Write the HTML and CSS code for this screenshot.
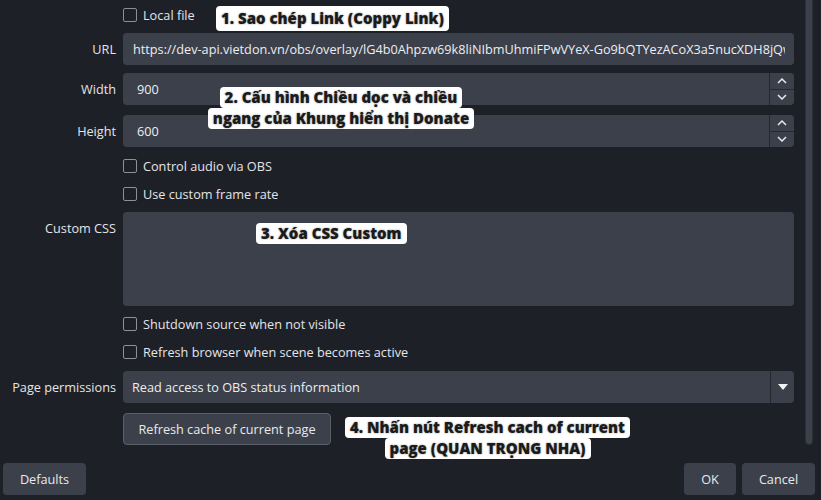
FILE: index.html
```html
<!DOCTYPE html>
<html lang="vi">
<head>
  <meta charset="UTF-8">
  <title>Browser Source Properties</title>
  <link rel="stylesheet" href="styles.css">
</head>
<body>
  <div class="window">
    <div class="scroll-area">
      <div class="form">
        <div class="row check-row first">
          <span></span>
          <label class="check"><input type="checkbox"> Local file</label>
        </div>

        <div class="row field-row url-row">
          <span class="label">URL</span>
          <input class="text-input" type="text" value="https://dev-api.vietdon.vn/obs/overlay/lG4b0Ahpzw69k8liNIbmUhmiFPwVYeX-Go9bQTYezACoX3a5nucXDH8jQwRt">
        </div>

        <div class="row field-row width-row">
          <span class="label">Width</span>
          <div class="spin">
            <span class="spin-value">900</span>
            <div class="spin-buttons">
              <span class="spin-btn"><svg width="10" height="6" viewBox="0 0 10 6"><polyline points="1,5 5,1 9,5" fill="none" stroke="#e8e8e8" stroke-width="1.5"/></svg></span>
              <span class="spin-btn"><svg width="10" height="6" viewBox="0 0 10 6"><polyline points="1,1 5,5 9,1" fill="none" stroke="#e8e8e8" stroke-width="1.5"/></svg></span>
            </div>
          </div>
        </div>

        <div class="row field-row height-row">
          <span class="label">Height</span>
          <div class="spin">
            <span class="spin-value">600</span>
            <div class="spin-buttons">
              <span class="spin-btn"><svg width="10" height="6" viewBox="0 0 10 6"><polyline points="1,5 5,1 9,5" fill="none" stroke="#e8e8e8" stroke-width="1.5"/></svg></span>
              <span class="spin-btn"><svg width="10" height="6" viewBox="0 0 10 6"><polyline points="1,1 5,5 9,1" fill="none" stroke="#e8e8e8" stroke-width="1.5"/></svg></span>
            </div>
          </div>
        </div>

        <div class="row check-row audio-row">
          <span></span>
          <label class="check"><input type="checkbox"> Control audio via OBS</label>
        </div>

        <div class="row check-row fps-row">
          <span></span>
          <label class="check"><input type="checkbox"> Use custom frame rate</label>
        </div>

        <div class="row css-row">
          <span class="label top">Custom CSS</span>
          <textarea class="css-box"></textarea>
        </div>

        <div class="row check-row shutdown-row">
          <span></span>
          <label class="check"><input type="checkbox"> Shutdown source when not visible</label>
        </div>

        <div class="row check-row refresh-row">
          <span></span>
          <label class="check"><input type="checkbox"> Refresh browser when scene becomes active</label>
        </div>

        <div class="row field-row perm-row">
          <span class="label">Page permissions</span>
          <div class="select">
            <span class="select-value">Read access to OBS status information</span>
            <span class="select-arrow"><svg width="10" height="6" viewBox="0 0 10 6"><polygon points="0,0 10,0 5,6" fill="#f2f2f2"/></svg></span>
          </div>
        </div>

        <div class="row button-row">
          <span></span>
          <div><button class="btn cache-btn">Refresh cache of current page</button></div>
        </div>
      </div>
      <div class="scrollbar"><div class="thumb"></div></div>
    </div>

    <div class="footer">
      <button class="btn defaults-btn">Defaults</button>
      <div class="footer-right">
        <button class="btn ok-btn">OK</button>
        <button class="btn cancel-btn">Cancel</button>
      </div>
    </div>

    <!-- tutorial notes pasted on top of the screenshot -->
    <div class="note note-1"><span>1. Sao chép Link (Coppy Link)</span></div>
    <div class="note note-2"><span>2. Cấu hình Chiều dọc và chiều</span><span>ngang của Khung hiển thị Donate</span></div>
    <div class="note note-3"><span>3. Xóa CSS Custom</span></div>
    <div class="note note-4"><span>4. Nhấn nút Refresh cach of current</span><span>page (QUAN TRỌNG NHA)</span></div>
  </div>
</body>
</html>
```

FILE: styles.css
```css
body { margin: 0; background: #1e2028; font-family: "Open Sans", "DejaVu Sans", sans-serif; font-size: 12.7px; color: #e4e5e8; }
.window { position: relative; width: 821px; height: 500px; overflow: hidden; }

.scroll-area { display: flex; height: 455px; }
.form { width: 794px; }
.row { display: grid; grid-template-columns: 116px 671px; column-gap: 7px; }
.label { text-align: right; align-self: center; white-space: nowrap; }
.label.top { align-self: start; padding-top: 7px; }

.check-row { height: 22px; align-items: center; }
.first { margin-top: 4px; }
.url-row { margin-top: 7px; }
.width-row { margin-top: 8px; }
.height-row { margin-top: 10px; }
.audio-row { margin-top: 8px; }
.fps-row { margin-top: 6px; }
.css-row { margin-top: 7px; }
.shutdown-row { margin-top: 7px; }
.refresh-row { margin-top: 6px; }
.perm-row { margin-top: 8px; }
.button-row { margin-top: 10px; }

.check { display: flex; align-items: center; gap: 6px; cursor: default; }
.check input { appearance: none; margin: 0; width: 14px; height: 14px; border: 1px solid #8d909a; border-radius: 2px; background: transparent; box-sizing: border-box; }

.text-input { height: 32px; box-sizing: border-box; background: #3c404b; border: none; border-radius: 4px; padding: 0 9px 0 10px; font: inherit; color: #eceef1; outline: none; }

.spin { display: flex; height: 32px; background: #3c404b; border-radius: 4px; overflow: hidden; }
.spin-value { flex: 1; padding-left: 14px; line-height: 32px; color: #eceef1; }
.spin-buttons { width: 24px; display: flex; flex-direction: column; border-left: 1px solid #262831; }
.spin-btn { flex: 1; display: flex; align-items: center; justify-content: center; }
.spin-btn + .spin-btn { border-top: 1px solid #262831; }

.css-box { height: 94px; box-sizing: border-box; background: #3c404b; border: none; border-radius: 4px; resize: none; outline: none; }

.select { display: flex; height: 32px; background: #3c404b; border-radius: 4px; }
.select-value { flex: 1; padding-left: 9px; line-height: 32px; color: #eceef1; }
.select-arrow { width: 23px; border-left: 1px solid #262831; display: flex; align-items: center; justify-content: center; }

.btn { font: inherit; color: #e8e9ec; background: #3c404b; border: 1px solid transparent; border-radius: 4px; height: 32px; box-sizing: border-box; padding: 0; white-space: nowrap; }
.cache-btn { width: 208px; border-color: #5b5f6b; }

.scrollbar { margin-left: 11px; width: 8px; }
.thumb { height: 451px; margin-top: -6px; background: #3c404b; border: 1px solid #2c2f38; border-radius: 4px; box-sizing: border-box; }

.footer { display: flex; justify-content: space-between; padding: 8px 6px 0 3px; }
.footer-right { display: flex; gap: 6px; }
.defaults-btn { width: 83px; }
.ok-btn { width: 52px; }
.cancel-btn { width: 73px; }

.note { position: absolute; display: flex; flex-direction: column; align-items: center; font-family: "Open Sans", Lato, sans-serif; font-weight: 800; font-size: 15px; line-height: 21px; color: #1b1b1b; text-shadow: 0 0 2px rgba(0, 0, 0, 0.45); }
.note span { background: #ffffff; border-radius: 4px; padding: 0 5px; white-space: nowrap; }
.note-1 { left: 216px; top: 6px; }
.note-1 span { padding: 2px 5px; }
.note-2 { left: 209px; top: 87px; width: 264px; }
.note-3 { left: 256px; top: 223px; }
.note-4 { left: 348px; top: 417px; width: 279px; }
```
